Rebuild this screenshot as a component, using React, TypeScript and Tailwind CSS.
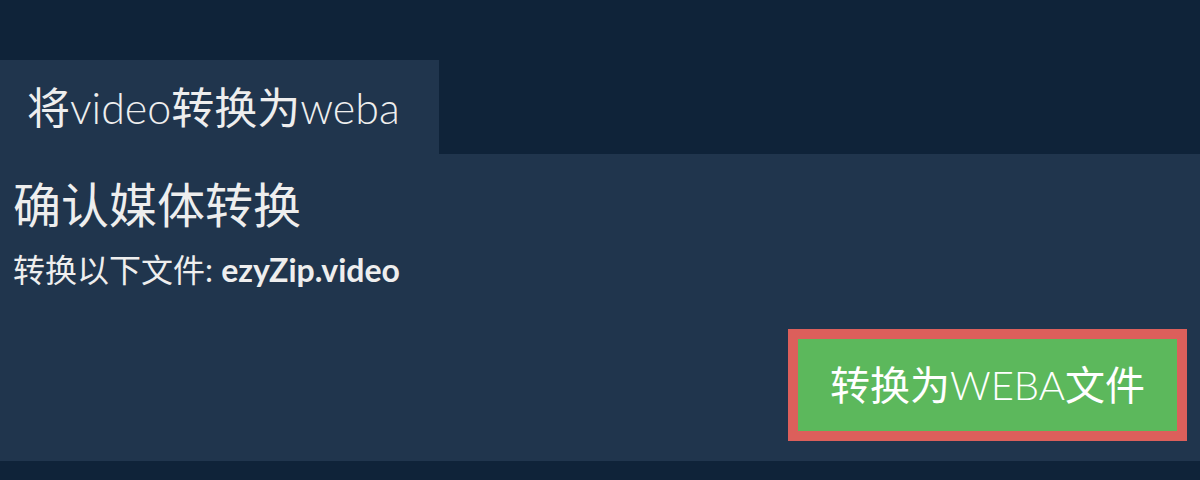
const latin = "font-['Lato','Noto_Sans_CJK_SC',sans-serif]";

export default function App() {
  return (
    <div className={`min-h-[480px] bg-[#0f2339] pt-[60px] ${latin}`}>
      <div className="flex">
        <div className="h-[94px] w-[439px] bg-[#20354d] flex items-center pl-[27px]">
          <h1 className="text-[43px] leading-none text-[#eeeeee] font-normal">
            将<span className="font-light">video</span>转换为
            <span className="font-light">weba</span>
          </h1>
        </div>
      </div>
      <div className="bg-[#20354d] px-[13px] pt-[22px] pb-[20px]">
        <h2 className="text-[48px] leading-[58px] text-[#eeeeee] font-normal">
          确认媒体转换
        </h2>
        <p className="mt-[16px] text-[32px] leading-[40px] text-[#eeeeee]">
          转换以下文件: <b className="font-bold">ezyZip.video</b>
        </p>
        <div className="mt-[39px] flex justify-end">
          <button className="h-[112px] w-[399px] border-[10px] border-[#dc5f5b] bg-[#5cb85c] text-white text-[40px] leading-none font-normal flex items-center justify-center">
            转换为<span className="font-light">WEBA</span>文件
          </button>
        </div>
      </div>
    </div>
  );
}
